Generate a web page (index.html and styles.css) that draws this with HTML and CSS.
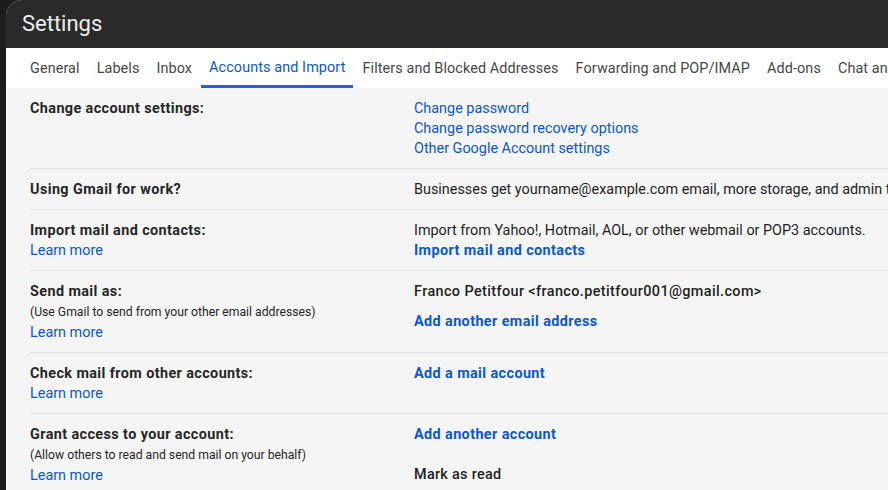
FILE: index.html
```html
<!DOCTYPE html>
<html lang="en">
<head>
    <meta charset="UTF-8">
    <meta name="viewport" content="width=device-width, initial-scale=1.0">
    <title>Settings</title>
    <link rel="stylesheet" href="styles.css">
</head>
<body>
    <div class="window">
        <div class="header">Settings</div>

        <div class="tabs">
            <div class="tab">General</div>
            <div class="tab">Labels</div>
            <div class="tab">Inbox</div>
            <div class="tab active">Accounts and Import</div>
            <div class="tab">Filters and Blocked Addresses</div>
            <div class="tab">Forwarding and POP/IMAP</div>
            <div class="tab">Add-ons</div>
            <div class="tab">Chat and Meet</div>
            <div class="tab">Advanced</div>
        </div>

        <div class="settings">
            <div class="row">
                <div class="label">
                    <div class="title">Change account settings:</div>
                </div>
                <div class="value">
                    <a class="link">Change password</a>
                    <a class="link">Change password recovery options</a>
                    <a class="link">Other Google Account settings</a>
                </div>
            </div>

            <div class="row">
                <div class="label">
                    <div class="title">Using Gmail for work?</div>
                </div>
                <div class="value">
                    <div>Businesses get yourname@example.com email, more storage, and admin tools with Google Workspace.</div>
                </div>
            </div>

            <div class="row">
                <div class="label">
                    <div class="title">Import mail and contacts:</div>
                    <a class="link">Learn more</a>
                </div>
                <div class="value">
                    <div>Import from Yahoo!, Hotmail, AOL, or other webmail or POP3 accounts.</div>
                    <a class="link strong">Import mail and contacts</a>
                </div>
            </div>

            <div class="row">
                <div class="label">
                    <div class="title">Send mail as:</div>
                    <div class="hint">(Use Gmail to send from your other email addresses)</div>
                    <a class="link">Learn more</a>
                </div>
                <div class="value">
                    <div class="address">Franco Petitfour &lt;franco.petitfour001@gmail.com&gt;</div>
                    <a class="link strong spaced">Add another email address</a>
                </div>
            </div>

            <div class="row">
                <div class="label">
                    <div class="title">Check mail from other accounts:</div>
                    <a class="link">Learn more</a>
                </div>
                <div class="value">
                    <a class="link strong">Add a mail account</a>
                </div>
            </div>

            <div class="row">
                <div class="label">
                    <div class="title">Grant access to your account:</div>
                    <div class="hint">(Allow others to read and send mail on your behalf)</div>
                    <a class="link">Learn more</a>
                </div>
                <div class="value">
                    <a class="link strong">Add another account</a>
                    <div class="subhead">Mark as read</div>
                    <label class="option"><span class="radio"></span>Mark conversation as read when opened by others</label>
                    <label class="option"><span class="radio off"></span>Leave conversation unread when opened by others</label>
                </div>
            </div>
        </div>
    </div>
</body>
</html>
```

FILE: styles.css
```css
body {
    margin: 0;
    padding-left: 6px;
    height: 490px;
    overflow: hidden;
    background-color: #1c1c1c;
    font-family: Roboto, "Liberation Sans", Arial, sans-serif;
    font-size: 14.4px;
    color: #1f1f1f;
}

.window {
    height: 490px;
    background-color: #f5f5f5;
    border-top-left-radius: 16px;
    overflow: hidden;
}

.header {
    height: 48px;
    line-height: 48px;
    padding-left: 16px;
    background-color: #2a2a2a;
    color: #ededed;
    font-size: 22px;
}

.tabs {
    display: flex;
    height: 40px;
    padding-left: 16px;
    background-color: #fff;
    white-space: nowrap;
}

.tab {
    padding: 2px 8px 0;
    line-height: 38px;
    color: #474747;
    letter-spacing: 0.1px;
}

.tab + .tab {
    margin-left: 1px;
}

.tab.active {
    color: #0b57d0;
    border-bottom: 3px solid #1a66d8;
    line-height: 35px;
}

.settings {
    padding-left: 24px;
}

.row {
    display: grid;
    grid-template-columns: 384px 1fr;
    padding: 11px 0 9px;
    border-bottom: 1px solid #e0e0e0;
    line-height: 20px;
    white-space: nowrap;
}

.label,
.value {
    display: flex;
    flex-direction: column;
    align-items: flex-start;
}

.title {
    font-weight: bold;
    color: #262626;
    letter-spacing: 0.4px;
}

.hint {
    font-size: 12.2px;
    line-height: 21px;
    color: #262626;
}

.link {
    color: #0b57d0;
    cursor: pointer;
}

.link.strong {
    font-weight: bold;
    letter-spacing: 0.4px;
}

.address {
    font-weight: 500;
    letter-spacing: 0.4px;
}

.spaced {
    margin-top: 10px;
}

.subhead {
    margin-top: 20px;
    font-weight: 500;
    letter-spacing: 0.3px;
}

.option {
    display: flex;
    align-items: center;
    gap: 8px;
    margin-top: 4px;
}

.radio {
    width: 10px;
    height: 10px;
    border: 2px solid #188038;
    border-radius: 50%;
    background: radial-gradient(circle, #188038 45%, transparent 50%);
}

.radio.off {
    background: none;
    border-color: #5f6368;
}
```
